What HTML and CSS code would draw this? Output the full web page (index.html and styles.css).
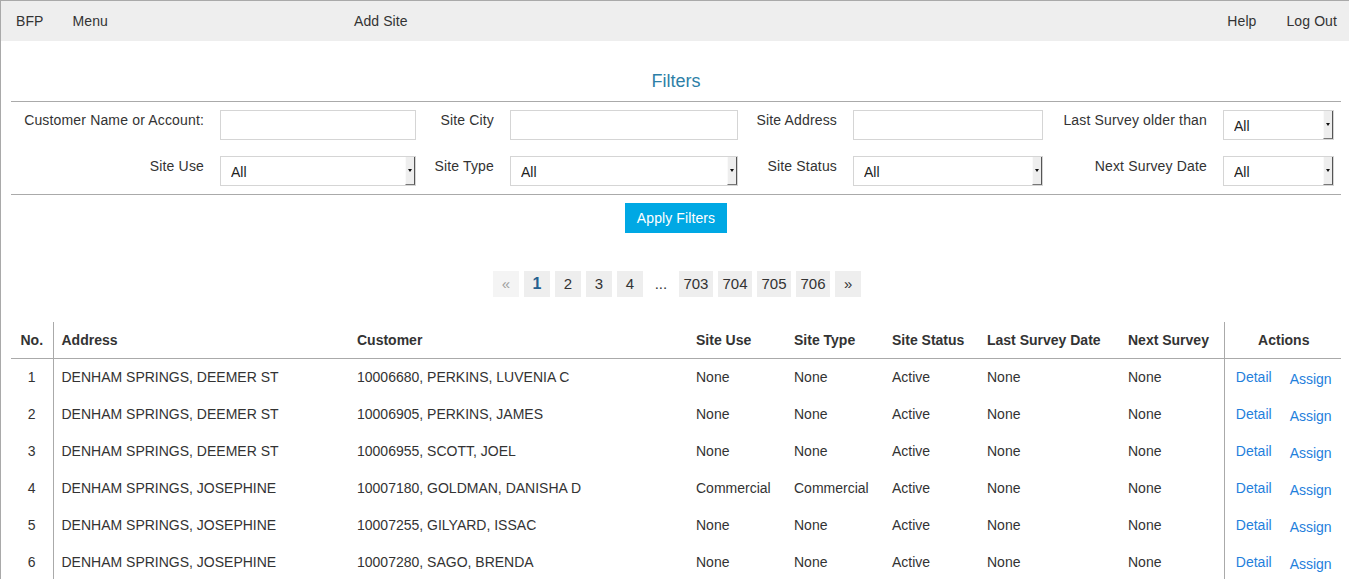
FILE: index.html
```html
<!DOCTYPE html>
<html>
<head>
<meta charset="utf-8">
<title>BFP Sites</title>
<link rel="stylesheet" href="styles.css">
</head>
<body>
<nav class="topbar">
  <a class="nav-brand">BFP</a>
  <a class="nav-menu">Menu</a>
  <a class="nav-add">Add Site</a>
  <div class="nav-right">
    <a>Help</a>
    <a>Log Out</a>
  </div>
</nav>

<main class="content">
  <h2 class="filters-title">Filters</h2>
  <div class="filters">
    <label class="f-label">Customer Name or Account:</label>
    <input class="f-input" type="text">
    <label class="f-label">Site City</label>
    <input class="f-input" type="text">
    <label class="f-label">Site Address</label>
    <input class="f-input" type="text">
    <label class="f-label">Last Survey older than</label>
    <div class="f-select"><select><option>All</option></select><span class="arrow"></span></div>

    <label class="f-label">Site Use</label>
    <div class="f-select"><select><option>All</option></select><span class="arrow"></span></div>
    <label class="f-label">Site Type</label>
    <div class="f-select"><select><option>All</option></select><span class="arrow"></span></div>
    <label class="f-label">Site Status</label>
    <div class="f-select"><select><option>All</option></select><span class="arrow"></span></div>
    <label class="f-label">Next Survey Date</label>
    <div class="f-select"><select><option>All</option></select><span class="arrow"></span></div>
  </div>
  <div class="apply-row"><button class="apply">Apply Filters</button></div>

  <ul class="pager">
    <li class="pg disabled">&laquo;</li>
    <li class="pg active">1</li>
    <li class="pg">2</li>
    <li class="pg">3</li>
    <li class="pg">4</li>
    <li class="pg dots">...</li>
    <li class="pg">703</li>
    <li class="pg">704</li>
    <li class="pg">705</li>
    <li class="pg">706</li>
    <li class="pg">&raquo;</li>
  </ul>

  <table class="sites">
    <colgroup>
      <col class="c-no"><col class="c-addr"><col class="c-cust"><col class="c-use"><col class="c-type"><col class="c-status"><col class="c-last"><col class="c-next"><col class="c-act">
    </colgroup>
    <thead>
      <tr><th class="no">No.</th><th>Address</th><th>Customer</th><th>Site Use</th><th>Site Type</th><th>Site Status</th><th>Last Survey Date</th><th>Next Survey</th><th class="act">Actions</th></tr>
    </thead>
    <tbody>
      <tr><td class="no">1</td><td>DENHAM SPRINGS, DEEMER ST</td><td>10006680, PERKINS, LUVENIA C</td><td>None</td><td>None</td><td>Active</td><td>None</td><td>None</td><td class="act"><a class="detail">Detail</a><a class="assign">Assign</a></td></tr>
      <tr><td class="no">2</td><td>DENHAM SPRINGS, DEEMER ST</td><td>10006905, PERKINS, JAMES</td><td>None</td><td>None</td><td>Active</td><td>None</td><td>None</td><td class="act"><a class="detail">Detail</a><a class="assign">Assign</a></td></tr>
      <tr><td class="no">3</td><td>DENHAM SPRINGS, DEEMER ST</td><td>10006955, SCOTT, JOEL</td><td>None</td><td>None</td><td>Active</td><td>None</td><td>None</td><td class="act"><a class="detail">Detail</a><a class="assign">Assign</a></td></tr>
      <tr><td class="no">4</td><td>DENHAM SPRINGS, JOSEPHINE</td><td>10007180, GOLDMAN, DANISHA D</td><td>Commercial</td><td>Commercial</td><td>Active</td><td>None</td><td>None</td><td class="act"><a class="detail">Detail</a><a class="assign">Assign</a></td></tr>
      <tr><td class="no">5</td><td>DENHAM SPRINGS, JOSEPHINE</td><td>10007255, GILYARD, ISSAC</td><td>None</td><td>None</td><td>Active</td><td>None</td><td>None</td><td class="act"><a class="detail">Detail</a><a class="assign">Assign</a></td></tr>
      <tr><td class="no">6</td><td>DENHAM SPRINGS, JOSEPHINE</td><td>10007280, SAGO, BRENDA</td><td>None</td><td>None</td><td>Active</td><td>None</td><td>None</td><td class="act"><a class="detail">Detail</a><a class="assign">Assign</a></td></tr>
    </tbody>
  </table>
</main>
</body>
</html>
```

FILE: styles.css
```css
* { box-sizing: border-box; }

html, body { height: 100%; }

body {
  margin: 0;
  border-top: 1px solid #a9a9a9;
  border-left: 1px solid #a9a9a9;
  font-family: "Liberation Sans", Arial, sans-serif;
  font-size: 14px;
  color: #333;
  background: #fff;
  overflow: hidden;
}

/* top navigation */
.topbar {
  display: flex;
  align-items: center;
  height: 40px;
  background: #eeeeee;
}
.topbar a { color: #333; text-decoration: none; line-height: 20px; letter-spacing: 0.1px; }
.nav-brand { margin-left: 15px; }
.nav-menu { margin-left: 29px; }
.nav-add { margin-left: 246px; }
.nav-right {
  margin-left: auto;
  display: flex;
  gap: 30px;
  padding-right: 12px;
}

/* content */
.content {
  margin: 0 8px 0 10px;
}

.filters-title {
  margin: 28px 0 0;
  padding-bottom: 8px;
  border-bottom: 1px solid #aaa;
  text-align: center;
  font-size: 18px;
  font-weight: normal;
  line-height: 24px;
  color: #2d7fa7;
}

.filters {
  display: grid;
  grid-template-columns: 209px 196px 94px 228px 115px 190px 180px 111px;
  grid-template-rows: 30px 30px;
  row-gap: 16px;
  padding: 8px 0 8px;
  border-bottom: 1px solid #aaa;
}

.f-label {
  align-self: start;
  text-align: right;
  padding-right: 16px;
  line-height: 20px;
  white-space: nowrap;
  letter-spacing: 0.16px;
}

.f-input {
  width: 100%;
  height: 30px;
  border: 1px solid #d5d5d5;
  background: #fff;
  margin: 0;
}

.f-select {
  position: relative;
  height: 30px;
}
.f-select select {
  -webkit-appearance: none;
  appearance: none;
  width: 100%;
  height: 100%;
  margin: 0;
  border: 1px solid #d5d5d5;
  border-radius: 0;
  background: #fff;
  padding: 1px 0 0 10px;
  font-family: "Liberation Sans", Arial, sans-serif;
  font-size: 14px;
  color: #222;
}
.f-select .arrow {
  position: absolute;
  top: 1px;
  bottom: 1px;
  right: 1px;
  width: 10px;
  background: #eeeeee;
  border-left: 1px solid #fafafa;
  border-right: 1px solid #555;
  border-bottom: 1px solid #777;
  pointer-events: none;
}
.f-select .arrow::after {
  content: "";
  position: absolute;
  left: 2px;
  top: 12px;
  border-left: 2.5px solid transparent;
  border-right: 2.5px solid transparent;
  border-top: 3px solid #111;
}

.apply-row {
  display: flex;
  justify-content: center;
  padding-top: 8px;
}
.apply {
  height: 30px;
  padding: 0 12px;
  border: none;
  background: #00a8e4;
  color: #fff;
  font-family: "Liberation Sans", Arial, sans-serif;
  font-size: 14px;
  letter-spacing: 0.1px;
}

/* pagination */
.pager {
  list-style: none;
  margin: 38px 0 0;
  padding: 0;
  display: flex;
  justify-content: center;
  gap: 5px;
  transform: translateX(1px);
}
.pg {
  min-width: 26px;
  height: 26px;
  padding: 0 4.5px;
  background: #eeeeee;
  color: #333;
  font-size: 15px;
  line-height: 26px;
  text-align: center;
}
.pg.disabled { background: #f4f4f4; color: #a0a0a0; }
.pg.active { font-weight: bold; font-size: 16px; color: #25608f; }
.pg.dots { background: transparent; }

/* table */
.sites {
  width: 100%;
  margin-top: 25px;
  border-collapse: collapse;
  table-layout: fixed;
}
.c-no { width: 42px; }
.c-addr { width: 296px; }
.c-cust { width: 339px; }
.c-use { width: 98px; }
.c-type { width: 98px; }
.c-status { width: 95px; }
.c-last { width: 141px; }
.c-next { width: 104px; }
.c-act { width: 117px; }

.sites th {
  height: 36px;
  padding: 0 8px;
  text-align: left;
  font-weight: bold;
  border-bottom: 1px solid #aaa;
  white-space: nowrap;
}
.sites td {
  height: 37px;
  padding: 0 8px;
  white-space: nowrap;
}
.sites .no { text-align: center; border-right: 1px solid #aaa; padding: 0; }
.sites .act { text-align: center; border-left: 1px solid #aaa; padding: 0 0 0 2px; }

.sites a { color: #1f80dc; text-decoration: none; }
.detail { margin-right: 18px; }
.assign { display: inline-block; transform: translateY(2px); }
```
